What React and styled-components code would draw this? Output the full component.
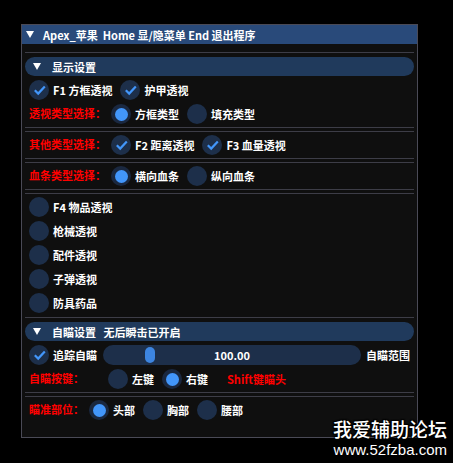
import React from "react";
import styled, { createGlobalStyle } from "styled-components";

const GlobalStyle = createGlobalStyle`
  html, body { margin: 0; padding: 0; background: #000; }
  body { font-family: "Noto Sans CJK SC", "Noto Sans", sans-serif; }
  * { box-sizing: border-box; }
`;

const C = {
  frame: "#1d2f4a",
  header: "#203a5c",
  title: "#294a7a",
  accent: "#4296fa",
  grab: "#3d85e0",
  border: "#4a4a56",
  sep: "#3d3d47",
  red: "#ff0000",
};

const Page = styled.div`
  position: relative;
  width: 453px;
  height: 463px;
  padding: 24px 0 0 21px;
  overflow: hidden;
`;

const Window = styled.div`
  width: 397px;
  height: 414px;
  border: 1px solid ${C.border};
  background: #0f0f0f;
  display: flex;
  flex-direction: column;
`;

const TitleBar = styled.div`
  height: 19px;
  background: ${C.title};
  display: flex;
  align-items: center;
  gap: 9px;
  padding-left: 4px;
  color: #fff;
  font-size: 11px;
  font-weight: 700;
  white-space: pre;
`;

const Body = styled.div`
  display: flex;
  flex-direction: column;
  gap: 4px;
  padding: 8px 3px;
`;

const Separator = styled.div`
  height: 1px;
  background: ${C.sep};
`;

const DoubleSep = styled.div`
  height: 5px;
  margin: -1px 0;
  border-top: 1px solid ${C.sep};
  border-bottom: 1px solid ${C.sep};
`;

const Header = styled.div`
  height: 19px;
  border-radius: 10px;
  background: ${C.header};
  display: flex;
  align-items: center;
  gap: 11px;
  padding-left: 8px;
  color: #fff;
  font-size: 11px;
  font-weight: 700;
  white-space: pre;
`;

const Row = styled.div`
  height: 20px;
  display: flex;
  align-items: center;
  gap: 8px;
  padding-left: 4px;
  color: #fff;
  font-size: 11px;
  font-weight: 700;
  white-space: pre;
`;

const Label = styled.span`
  flex: 0 0 ${(p) => p.$w}px;
  width: ${(p) => p.$w}px;
  min-width: 0;
  overflow: visible;
  color: ${C.red};
  font-size: 11px;
  font-weight: 700;
  margin-top: -3px;
`;

const RedNote = styled.span`
  color: ${C.red};
  font-size: 11px;
  font-weight: 700;
  margin-left: ${(p) => p.$ml || 0}px;
`;

const Item = styled.span`
  display: inline-flex;
  align-items: center;
  gap: 4px;
`;

const Circle = styled.span`
  flex: 0 0 20px;
  width: 20px;
  height: 20px;
  border-radius: 50%;
  background: ${(p) => (p.$on && p.$radio ? "#1a2840" : C.frame)};
  display: flex;
  align-items: center;
  justify-content: center;
`;

const Dot = styled.span`
  width: 13px;
  height: 13px;
  border-radius: 50%;
  background: ${C.accent};
`;

const Slider = styled.div`
  position: relative;
  flex: 0 0 258px;
  height: 20px;
  border-radius: 10px;
  background: ${C.frame};
  display: flex;
  align-items: center;
  justify-content: center;
  margin-left: -2px;
  color: #fff;
  font-size: 11px;
  font-weight: 700;
`;

const Grab = styled.span`
  position: absolute;
  top: 2px;
  width: 10px;
  height: 16px;
  border-radius: 5px;
  background: ${C.grab};
`;

const SideText = styled.span`
  margin-left: -3px;
`;

const Watermark = styled.div`
  position: absolute;
  right: 6px;
  bottom: 5px;
  display: flex;
  flex-direction: column;
  align-items: flex-end;
  color: #fff;
  text-shadow: 0 0 2px #000, 1px 1px 1px #000, -1px -1px 1px #000, 1px -1px 1px #000, -1px 1px 1px #000;
`;

const WmTitle = styled.div`
  font-family: "Noto Sans CJK SC", sans-serif;
  font-size: 19px;
  font-weight: 500;
  line-height: 24px;
`;

const WmUrl = styled.div`
  font-family: "Liberation Sans", Arial, sans-serif;
  font-size: 15px;
  line-height: 17px;
`;

const Arrow = () => (
  <svg width="8" height="7" viewBox="0 0 8 7">
    <polygon points="0,0 8,0 4,7" fill="#fff" />
  </svg>
);

const Check = ({ on = true, children }) => (
  <Item>
    <Circle>
      {on && (
        <svg width="20" height="20" viewBox="0 0 20 20">
          <polyline points="5.8,10.2 9.2,13.6 15.8,6.6" fill="none" stroke={C.accent} strokeWidth="2.2" />
        </svg>
      )}
    </Circle>
    {children}
  </Item>
);

const Radio = ({ on, children }) => (
  <Item>
    <Circle $radio $on={on}>{on && <Dot />}</Circle>
    {children}
  </Item>
);

export default function App() {
  const value = 100;
  const grabPct = 0.17;
  return (
    <>
      <GlobalStyle />
      <Page>
        <Window>
          <TitleBar>
            <Arrow />
            <span>Apex_苹果  Home 显/隐菜单 End 退出程序</span>
          </TitleBar>
          <Body>
            <Separator />
            <Header>
              <Arrow />
              <span>显示设置</span>
            </Header>
            <Row>
              <Check>F1 方框透视</Check>
              <Check>护甲透视</Check>
            </Row>
            <Row>
              <Label $w={74}>透视类型选择：</Label>
              <Radio on>方框类型</Radio>
              <Radio>填充类型</Radio>
            </Row>
            <DoubleSep />
            <Row>
              <Label $w={74}>其他类型选择：</Label>
              <Check>F2 距离透视</Check>
              <Check>F3 血量透视</Check>
            </Row>
            <DoubleSep />
            <Row>
              <Label $w={74}>血条类型选择：</Label>
              <Radio on>横向血条</Radio>
              <Radio>纵向血条</Radio>
            </Row>
            <DoubleSep />
            <Row><Radio>F4 物品透视</Radio></Row>
            <Row><Radio>枪械透视</Radio></Row>
            <Row><Radio>配件透视</Radio></Row>
            <Row><Radio>子弹透视</Radio></Row>
            <Row><Radio>防具药品</Radio></Row>
            <Separator />
            <Header>
              <Arrow />
              <span>自瞄设置   无后瞬击已开启</span>
            </Header>
            <Row>
              <Check>追踪自瞄</Check>
              <Slider>
                <Grab style={{ left: `${grabPct * 248}px` }} />
                {value.toFixed(2)}
              </Slider>
              <SideText>自瞄范围</SideText>
            </Row>
            <Row>
              <Label $w={71}>自瞄按键：</Label>
              <Radio>左键</Radio>
              <Radio on>右键</Radio>
              <RedNote $ml={11}>Shift键瞄头</RedNote>
            </Row>
            <DoubleSep />
            <Row>
              <Label $w={52}>瞄准部位：</Label>
              <Radio on>头部</Radio>
              <Radio>胸部</Radio>
              <Radio>腰部</Radio>
            </Row>
          </Body>
        </Window>
        <Watermark>
          <WmTitle>我爱辅助论坛</WmTitle>
          <WmUrl>www.52fzba.com</WmUrl>
        </Watermark>
      </Page>
    </>
  );
}
